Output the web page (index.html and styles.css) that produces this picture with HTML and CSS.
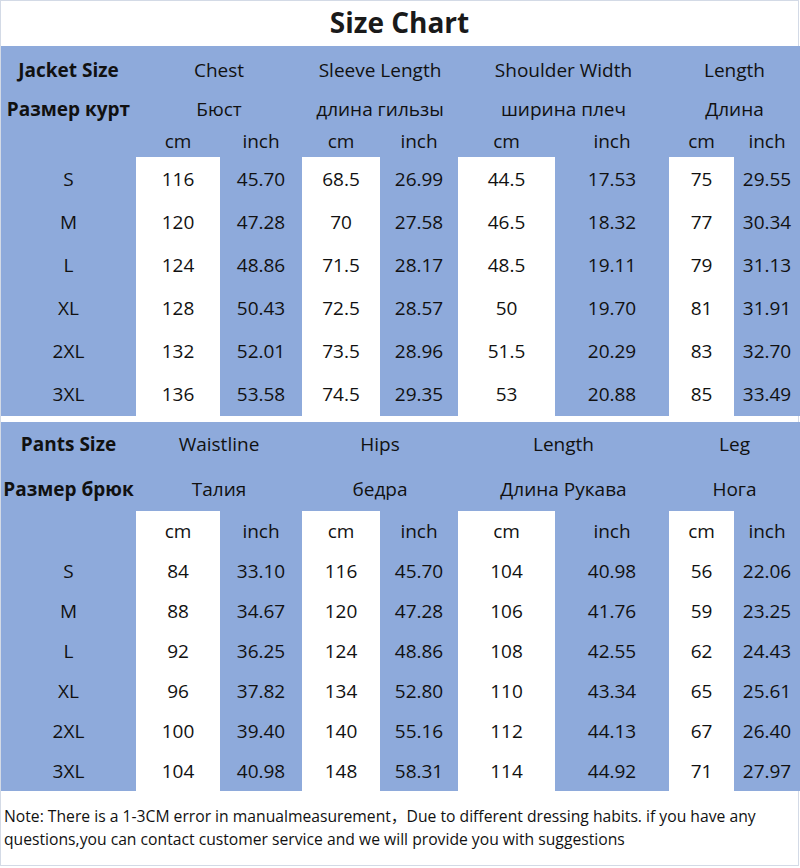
FILE: index.html
```html
<!DOCTYPE html>
<html>
<head>
<meta charset="utf-8">
<link rel="stylesheet" href="styles.css">
</head>
<body>
<div class="sheet">
  <h1 class="title">Size Chart</h1>

  <div class="chart jacket">
    <div class="c b">Jacket Size</div>
    <div class="c s2">Chest</div>
    <div class="c s2">Sleeve Length</div>
    <div class="c s2">Shoulder Width</div>
    <div class="c s2">Length</div>

    <div class="c b">Размер курт</div>
    <div class="c s2">Бюст</div>
    <div class="c s2">длина гильзы</div>
    <div class="c s2">ширина плеч</div>
    <div class="c s2">Длина</div>

    <div class="c"></div>
    <div class="c">cm</div><div class="c">inch</div>
    <div class="c">cm</div><div class="c">inch</div>
    <div class="c">cm</div><div class="c">inch</div>
    <div class="c">cm</div><div class="c">inch</div>

    <div class="c">S</div><div class="c w">116</div><div class="c">45.70</div><div class="c w">68.5</div><div class="c">26.99</div><div class="c w">44.5</div><div class="c">17.53</div><div class="c w">75</div><div class="c">29.55</div>
    <div class="c">M</div><div class="c w">120</div><div class="c">47.28</div><div class="c w">70</div><div class="c">27.58</div><div class="c w">46.5</div><div class="c">18.32</div><div class="c w">77</div><div class="c">30.34</div>
    <div class="c">L</div><div class="c w">124</div><div class="c">48.86</div><div class="c w">71.5</div><div class="c">28.17</div><div class="c w">48.5</div><div class="c">19.11</div><div class="c w">79</div><div class="c">31.13</div>
    <div class="c">XL</div><div class="c w">128</div><div class="c">50.43</div><div class="c w">72.5</div><div class="c">28.57</div><div class="c w">50</div><div class="c">19.70</div><div class="c w">81</div><div class="c">31.91</div>
    <div class="c">2XL</div><div class="c w">132</div><div class="c">52.01</div><div class="c w">73.5</div><div class="c">28.96</div><div class="c w">51.5</div><div class="c">20.29</div><div class="c w">83</div><div class="c">32.70</div>
    <div class="c">3XL</div><div class="c w">136</div><div class="c">53.58</div><div class="c w">74.5</div><div class="c">29.35</div><div class="c w">53</div><div class="c">20.88</div><div class="c w">85</div><div class="c">33.49</div>
  </div>

  <div class="chart pants">
    <div class="c b">Pants Size</div>
    <div class="c s2">Waistline</div>
    <div class="c s2">Hips</div>
    <div class="c s2">Length</div>
    <div class="c s2">Leg</div>

    <div class="c b">Размер брюк</div>
    <div class="c s2">Талия</div>
    <div class="c s2">бедра</div>
    <div class="c s2">Длина Рукава</div>
    <div class="c s2">Нога</div>

    <div class="c"></div>
    <div class="c w">cm</div><div class="c">inch</div>
    <div class="c w">cm</div><div class="c">inch</div>
    <div class="c w">cm</div><div class="c">inch</div>
    <div class="c w">cm</div><div class="c">inch</div>

    <div class="c">S</div><div class="c w">84</div><div class="c">33.10</div><div class="c w">116</div><div class="c">45.70</div><div class="c w">104</div><div class="c">40.98</div><div class="c w">56</div><div class="c">22.06</div>
    <div class="c">M</div><div class="c w">88</div><div class="c">34.67</div><div class="c w">120</div><div class="c">47.28</div><div class="c w">106</div><div class="c">41.76</div><div class="c w">59</div><div class="c">23.25</div>
    <div class="c">L</div><div class="c w">92</div><div class="c">36.25</div><div class="c w">124</div><div class="c">48.86</div><div class="c w">108</div><div class="c">42.55</div><div class="c w">62</div><div class="c">24.43</div>
    <div class="c">XL</div><div class="c w">96</div><div class="c">37.82</div><div class="c w">134</div><div class="c">52.80</div><div class="c w">110</div><div class="c">43.34</div><div class="c w">65</div><div class="c">25.61</div>
    <div class="c">2XL</div><div class="c w">100</div><div class="c">39.40</div><div class="c w">140</div><div class="c">55.16</div><div class="c w">112</div><div class="c">44.13</div><div class="c w">67</div><div class="c">26.40</div>
    <div class="c">3XL</div><div class="c w">104</div><div class="c">40.98</div><div class="c w">148</div><div class="c">58.31</div><div class="c w">114</div><div class="c">44.92</div><div class="c w">71</div><div class="c">27.97</div>
  </div>

  <p class="note">Note: There is a 1-3CM error in manualmeasurement，Due to different dressing habits. if you have any questions,you can contact customer service and we will provide you with suggestions</p>
</div>
</body>
</html>
```

FILE: styles.css
```css
* { box-sizing: border-box; }
html, body { margin: 0; padding: 0; background: #fff; }
body {
  font-family: "Open Sans", "Noto Sans", "Noto Sans CJK SC", sans-serif;
  color: #111;
}
.sheet {
  width: 799px;
  height: 866px;
  border: 1px solid #d3dae6;
  display: flex;
  flex-direction: column;
  overflow: visible;
}
.title {
  margin: 0;
  height: 45px;
  padding-bottom: 3px;
  display: flex;
  align-items: center;
  justify-content: center;
  font-size: 28px;
  font-weight: 700;
  color: #1a1a1a;
}
.chart {
  display: grid;
  grid-template-columns: 135px 84px 82px 78px 78px 97px 114px 65px 66px;
  background: #8eaadb;
  width: 799px;
  font-size: 19px;
}
.jacket {
  grid-template-rows: 47px 31px 33px 43px 43px 43px 43px 43px 44px;
}
.pants {
  margin-top: 6px;
  grid-template-rows: 44px 45px 40px 40px 40px 40px 40px 40px 40px;
}
.c {
  display: flex;
  align-items: center;
  justify-content: center;
  white-space: nowrap;
}
.s2 { grid-column: span 2; }
.b { font-weight: 700; }
.w { background: #fff; }
.note {
  margin: 14px 0 0 3px;
  font-size: 15.7px;
  line-height: 23px;
  color: #111;
}
```
